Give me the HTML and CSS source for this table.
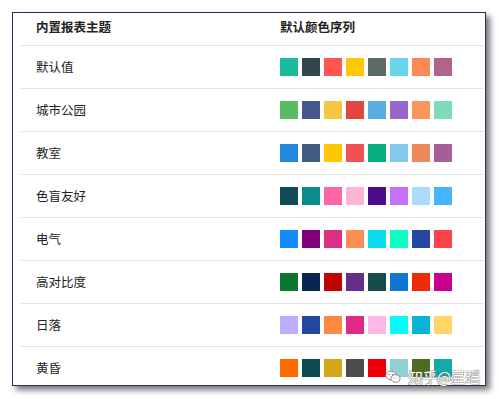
FILE: index.html
```html
<!DOCTYPE html>
<html lang="zh">
<head>
<meta charset="utf-8">
<link rel="stylesheet" href="styles.css">
</head>
<body>
<div class="frame">
  <div class="table">
    <div class="row head">
      <div class="name">内置报表主题</div>
      <div class="colors">默认颜色序列</div>
    </div>
    <div class="row">
      <div class="name">默认值</div>
      <div class="colors">
        <span class="sw" style="background:#1bbc9b"></span><span class="sw" style="background:#33474a"></span><span class="sw" style="background:#fd5754"></span><span class="sw" style="background:#fec804"></span><span class="sw" style="background:#5a6b66"></span><span class="sw" style="background:#67d6ea"></span><span class="sw" style="background:#fc8a59"></span><span class="sw" style="background:#b2628f"></span>
      </div>
    </div>
    <div class="row">
      <div class="name">城市公园</div>
      <div class="colors">
        <span class="sw" style="background:#5bbb63"></span><span class="sw" style="background:#44578a"></span><span class="sw" style="background:#f5c644"></span><span class="sw" style="background:#e34540"></span><span class="sw" style="background:#59ade1"></span><span class="sw" style="background:#9767cb"></span><span class="sw" style="background:#fc955c"></span><span class="sw" style="background:#7fdcb8"></span>
      </div>
    </div>
    <div class="row">
      <div class="name">教室</div>
      <div class="colors">
        <span class="sw" style="background:#2189d9"></span><span class="sw" style="background:#455a80"></span><span class="sw" style="background:#fdc802"></span><span class="sw" style="background:#ef524f"></span><span class="sw" style="background:#05ae80"></span><span class="sw" style="background:#85c8ee"></span><span class="sw" style="background:#ec8a5c"></span><span class="sw" style="background:#a55f98"></span>
      </div>
    </div>
    <div class="row">
      <div class="name">色盲友好</div>
      <div class="colors">
        <span class="sw" style="background:#124a55"></span><span class="sw" style="background:#0a8d8a"></span><span class="sw" style="background:#fc68a7"></span><span class="sw" style="background:#fdb4d6"></span><span class="sw" style="background:#4d0b8a"></span><span class="sw" style="background:#c570f6"></span><span class="sw" style="background:#abdcfc"></span><span class="sw" style="background:#43b6fe"></span>
      </div>
    </div>
    <div class="row">
      <div class="name">电气</div>
      <div class="colors">
        <span class="sw" style="background:#148cfe"></span><span class="sw" style="background:#7f007a"></span><span class="sw" style="background:#de3082"></span><span class="sw" style="background:#fe8c55"></span><span class="sw" style="background:#0adcf0"></span><span class="sw" style="background:#10fec4"></span><span class="sw" style="background:#2547a2"></span><span class="sw" style="background:#fd434e"></span>
      </div>
    </div>
    <div class="row">
      <div class="name">高对比度</div>
      <div class="colors">
        <span class="sw" style="background:#07782e"></span><span class="sw" style="background:#0b2550"></span><span class="sw" style="background:#bf0403"></span><span class="sw" style="background:#672d8a"></span><span class="sw" style="background:#174c4b"></span><span class="sw" style="background:#0f77d0"></span><span class="sw" style="background:#ef2a07"></span><span class="sw" style="background:#c9008f"></span>
      </div>
    </div>
    <div class="row">
      <div class="name">日落</div>
      <div class="colors">
        <span class="sw" style="background:#bbaefd"></span><span class="sw" style="background:#2147a1"></span><span class="sw" style="background:#fd8a44"></span><span class="sw" style="background:#de2c86"></span><span class="sw" style="background:#fdb9e4"></span><span class="sw" style="background:#02fdfd"></span><span class="sw" style="background:#0ab3d4"></span><span class="sw" style="background:#ffd56a"></span>
      </div>
    </div>
    <div class="row">
      <div class="name">黄昏</div>
      <div class="colors">
        <span class="sw" style="background:#fe6c01"></span><span class="sw" style="background:#0d4b4f"></span><span class="sw" style="background:#d6a51a"></span><span class="sw" style="background:#4c4c4c"></span><span class="sw" style="background:#ef0006"></span><span class="sw" style="background:#92d1d1"></span><span class="sw" style="background:#4a6d21"></span><span class="sw" style="background:#11aca6"></span>
      </div>
    </div>
  </div>
</div>
<div class="watermark">
  <svg class="wm-icon" width="16" height="14" viewBox="0 0 16 14">
    <ellipse cx="6" cy="5.5" rx="5.2" ry="4.3" fill="#fff" stroke="#8a8a8a" stroke-width="1"/>
    <ellipse cx="10.5" cy="8.5" rx="4.6" ry="3.8" fill="#fff" stroke="#8a8a8a" stroke-width="1"/>
    <circle cx="4.2" cy="4.6" r="0.8" fill="#8a8a8a"/>
    <circle cx="7.6" cy="4.6" r="0.8" fill="#8a8a8a"/>
    <circle cx="9" cy="8" r="0.6" fill="#8a8a8a"/>
    <circle cx="12" cy="8" r="0.6" fill="#8a8a8a"/>
  </svg>
  <span class="wm-text">知乎@星瑶</span>
</div>
</body>
</html>
```

FILE: styles.css
```css
html, body {
  margin: 0;
  padding: 0;
  background: #ffffff;
}

body {
  position: relative;
  width: 499px;
  height: 399px;
  overflow: hidden;
  font-family: "Noto Sans CJK SC", "Noto Sans", sans-serif;
  color: #222222;
}

.frame {
  margin: 12px 0 0 12px;
  width: 472px;
  height: 372px;
  border: 1px solid #1d3657;
  box-shadow: 4px 4px 6px rgba(0, 0, 0, 0.55);
  overflow: hidden;
  padding-left: 8px;
  box-sizing: content-box;
  background: #ffffff;
}

.frame {
  width: 464px;
}

.table {
  display: flex;
  flex-direction: column;
  width: 463px;
}

.row {
  display: flex;
  align-items: center;
  height: 42px;
  border-bottom: 1px solid #e2e2e2;
  flex-shrink: 0;
}

.row.head {
  height: 32px;
  padding-bottom: 0;
  font-weight: bold;
}

.row.head .name,
.row.head .colors {
  margin-top: -5px;
}

.name {
  width: 244px;
  padding-left: 15px;
  font-size: 12.5px;
  line-height: 16px;
}

.colors {
  display: flex;
  gap: 4px;
  font-size: 12.5px;
  line-height: 16px;
}

.sw {
  display: block;
  width: 18px;
  height: 18px;
}

.watermark {
  position: absolute;
  left: 385px;
  top: 369px;
  display: flex;
  align-items: center;
  gap: 7px;
}

.wm-text {
  font-size: 15px;
  line-height: 16px;
  color: #ffffff;
  letter-spacing: -0.5px;
  text-shadow: 0 0 1px #6a6a6a, 0 0 1px #6a6a6a, 0 0 1px #6a6a6a;
}
```
